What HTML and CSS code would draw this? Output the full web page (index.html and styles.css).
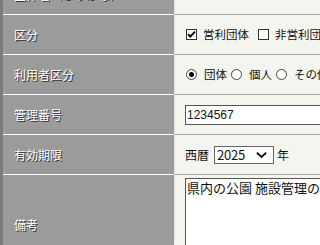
FILE: index.html
```html
<!DOCTYPE html>
<html lang="ja">
<head>
<meta charset="utf-8">
<link rel="stylesheet" href="styles.css">
</head>
<body>
<div class="form">
  <div class="row">
    <div class="label">団体名（ふりがな）</div>
    <div class="field"></div>
  </div>
  <div class="row">
    <div class="label">区分</div>
    <div class="field">
      <span class="check on"><svg viewBox="0 0 11 11" width="11" height="11"><path d="M2 5.2 L4.3 7.6 L9 2.6" fill="none" stroke="#000" stroke-width="1.8"/></svg></span><span class="opt">営利団体</span><span class="check"></span><span class="opt">非営利団体</span>
    </div>
  </div>
  <div class="row">
    <div class="label">利用者区分</div>
    <div class="field">
      <span class="radio on"></span><span class="opt r">団体</span><span class="radio"></span><span class="opt r">個人</span><span class="radio"></span><span class="opt r">その他</span>
    </div>
  </div>
  <div class="row">
    <div class="label">管理番号</div>
    <div class="field">
      <span class="textbox">1234567</span>
    </div>
  </div>
  <div class="row">
    <div class="label">有効期限</div>
    <div class="field">
      <span class="txt">西暦</span><span class="select"><span class="val">2025</span><svg viewBox="0 0 12 8" width="11" height="8"><path d="M1 1.5 L6 6.2 L11 1.5" fill="none" stroke="#111" stroke-width="2"/></svg></span><span class="txt">年</span>
    </div>
  </div>
  <div class="row tall">
    <div class="label">備考</div>
    <div class="field top">
      <div class="textarea">県内の公園&nbsp;施設管理の委託業務</div>
    </div>
  </div>
</div>
</body>
</html>
```

FILE: styles.css
```css
html, body {
  margin: 0;
  padding: 0;
  overflow: hidden;
  background: #f5f5ef;
}
body {
  font-family: "Noto Sans CJK JP", "DejaVu Sans", sans-serif;
}
.form {
  margin-top: -26px;
  border-left: 3px solid #7b7b7b;
}
.row {
  display: grid;
  grid-template-columns: 171px minmax(0, 1fr);
  height: 40px;
}
.row.tall {
  height: 100px;
}
.label {
  background: #9b9b9b;
  border-top: 1px solid #ffffff;
  color: #ffffff;
  font-size: 12px;
  line-height: 1;
  text-shadow: 1px 1px 0 #333333;
  padding-left: 11px;
  display: flex;
  align-items: center;
  white-space: nowrap;
  overflow: hidden;
}
.field {
  background: #f5f5ef;
  border-top: 1px solid #a8a8a8;
  border-left: 1px dotted #d8d8d8;
  padding-left: 10px;
  display: flex;
  align-items: center;
  overflow: hidden;
  white-space: nowrap;
  font-size: 11.5px;
  color: #111;
}
.field.top {
  align-items: flex-start;
  padding-top: 3px;
}
.check {
  width: 9px;
  height: 9px;
  border: 1px solid #333;
  background: #fff;
  margin-left: 1px;
  flex: none;
  display: flex;
  align-items: center;
  justify-content: center;
}
.check svg {
  display: block;
  flex: none;
}
.opt {
  margin-left: 6px;
  margin-right: 8px;
  line-height: 1;
}
.opt.r {
  margin-right: 3px;
  margin-left: 7px;
}
.radio {
  width: 9px;
  height: 9px;
  border: 1px solid #444;
  border-radius: 50%;
  background: #fff;
  flex: none;
  margin-left: 1px;
  display: flex;
  align-items: center;
  justify-content: center;
}
.radio.on::after {
  content: "";
  width: 5px;
  height: 5px;
  border-radius: 50%;
  background: #000;
}
.textbox {
  display: block;
  width: 200px;
  height: 18px;
  border: 1px solid #555;
  background: #fff;
  font-family: "Liberation Sans", sans-serif;
  font-size: 12px;
  line-height: 18px;
  padding-left: 1px;
  flex: none;
}
.txt {
  font-size: 12px;
  line-height: 1;
}
.select {
  display: flex;
  align-items: center;
  width: 56px;
  height: 16px;
  border: 1px solid #666;
  background: #fff;
  margin: 0 3px 0 5px;
  padding-left: 2px;
  flex: none;
  box-sizing: content-box;
}
.select .val {
  font-size: 13px;
  line-height: 1;
  flex: 1;
  letter-spacing: -0.2px;
}
.select svg {
  margin-right: 6px;
}
.textarea {
  width: 220px;
  height: 90px;
  border: 1px solid #555;
  background: #fff;
  font-size: 13px;
  line-height: 15px;
  padding: 1px 0 0 1px;
  flex: none;
}
```
